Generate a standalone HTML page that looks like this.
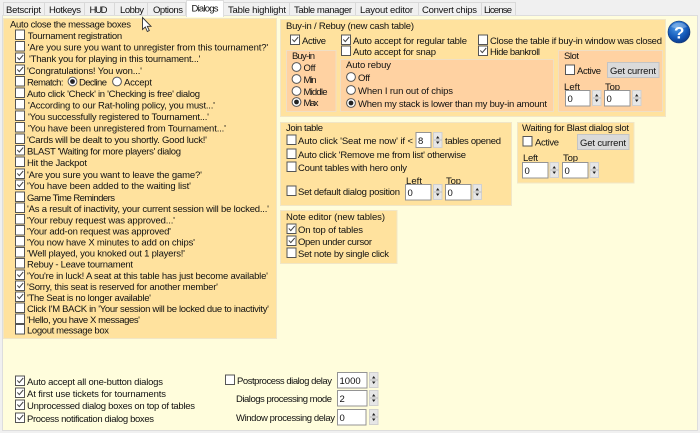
<!DOCTYPE html>
<html><head><meta charset="utf-8"><style>
html,body{margin:0;padding:0;width:700px;height:433px;overflow:hidden;background:#f0f0f0}
svg{display:block;filter:blur(.35px)}
text{font-family:"Liberation Sans",sans-serif;font-size:9.5px;fill:#111}
.b{fill:#FFE29E;stroke:#F1E6C6;stroke-width:1}
.s{fill:#FFD2A2;stroke:#F0DFC4;stroke-width:1}
.in{fill:#fff;stroke:#949494;stroke-width:1}
.bt{fill:#DADADA;stroke:#C4C4C4}
</style></head><body>
<svg width="700" height="433" viewBox="0 0 700 433" xmlns="http://www.w3.org/2000/svg">
<defs>
<g id="c"><rect x="-.5" y="-5" width="9" height="9.5" fill="#fff" stroke="#555"/></g>
<g id="k"><rect x="-.5" y="-5" width="9" height="9.5" fill="#fff" stroke="#555"/><path d="M1.3 -.6L3.3 1.6L7.2 -3" fill="none" stroke="#444" stroke-width="1"/></g>
<g id="r"><circle cx="4.5" cy="0" r="4.4" fill="#fff" stroke="#555"/></g>
<g id="q"><circle cx="4.5" cy="0" r="4.4" fill="#fff" stroke="#555"/><circle cx="4.5" cy="0" r="2.4" fill="#222"/></g>
<g id="p"><rect x=".5" y=".5" width="8.5" height="15" fill="#E6E6E6" stroke="#D0D0D0"/><path d="M4.7 4L3 6.5H6.5ZM4.7 12L3 9.5H6.5Z" fill="#222"/><path d="M1 8H9" stroke="#bbb"/></g>
<radialGradient id="h" cx=".4" cy=".3" r=".8"><stop offset="0" stop-color="#4d9be8"/><stop offset=".6" stop-color="#1258b8"/><stop offset="1" stop-color="#0a2f78"/></radialGradient>
</defs>

<!-- tabs -->
<g fill="#F0F0F0" stroke="#D9D9D9">
<rect x="3.5" y="2.5" width="41" height="14"/><rect x="44.5" y="2.5" width="40" height="14"/><rect x="84.5" y="2.5" width="30" height="14"/><rect x="114.5" y="2.5" width="33" height="14"/><rect x="147.5" y="2.5" width="38" height="14"/><rect x="223.5" y="2.5" width="66" height="14"/><rect x="289.5" y="2.5" width="66" height="14"/><rect x="355.5" y="2.5" width="63" height="14"/><rect x="418.5" y="2.5" width="63" height="14"/><rect x="481.5" y="2.5" width="34" height="14"/>
</g>
<rect x="2.5" y="15.5" width="695" height="415" fill="#FFFDDC" stroke="#DDD"/>
<rect x="186.5" y=".5" width="37" height="16" fill="#FFFFFF" stroke="#DDD"/>
<rect x="187" y="14" width="36" height="3" fill="#FFFFFF"/>
<text x="6" y="13" textLength="35">Betscript</text>
<text x="49" y="13" textLength="32">Hotkeys</text>
<text x="89.5" y="13" textLength="18">HUD</text>
<text x="120" y="13" textLength="24">Lobby</text>
<text x="153" y="13" textLength="30">Options</text>
<text x="191.5" y="11.5" textLength="27">Dialogs</text>
<text x="228" y="13" textLength="58">Table highlight</text>
<text x="294" y="13" textLength="58">Table manager</text>
<text x="360" y="13" textLength="53">Layout editor</text>
<text x="422" y="13" textLength="55">Convert chips</text>
<text x="484" y="13" textLength="28">License</text>

<!-- left box -->
<rect class="b" x="3.5" y="18.5" width="273" height="320"/>
<text x="10" y="27.5" textLength="121">Auto close the message boxes</text>
<use href="#c" x="16" y="35"/><text x="27.7" y="39" textLength="94.5">Tournament registration</text>
<use href="#c" x="16" y="46.5"/><text x="27.7" y="50.5" textLength="240.5">'Are you sure you want to unregister from this tournament?'</text>
<use href="#k" x="16" y="58"/><text x="29" y="62" textLength="171.5">'Thank you for playing in this tournament...'</text>
<use href="#k" x="16" y="70"/><text x="27" y="74" textLength="115">'Congratulations! You won...'</text>
<use href="#c" x="16" y="81.5"/><text x="27" y="85.5" textLength="36.5">Rematch:</text>
<use href="#q" x="68" y="81.5"/><text x="79" y="85.5" textLength="28">Decline</text>
<use href="#r" x="112.5" y="81.5"/><text x="124" y="85.5" textLength="28">Accept</text>
<use href="#c" x="16" y="93"/><text x="27" y="97" textLength="173">Auto click 'Check' in 'Checking is free' dialog</text>
<use href="#c" x="16" y="104.5"/><text x="28" y="108.5" textLength="187">'According to our Rat-holing policy, you must...'</text>
<use href="#c" x="16" y="116"/><text x="28" y="120" textLength="181">'You successfully registered to Tournament...'</text>
<use href="#c" x="16" y="127.5"/><text x="28" y="131.5" textLength="198">'You have been unregistered from Tournament...'</text>
<use href="#c" x="16" y="139"/><text x="27" y="143" textLength="180">'Cards will be dealt to you shortly. Good luck!'</text>
<use href="#k" x="16" y="150.5"/><text x="27" y="154.5" textLength="154">BLAST 'Waiting for more players' dialog</text>
<use href="#c" x="16" y="162"/><text x="27" y="166" textLength="60">Hit the Jackpot</text>
<use href="#k" x="16" y="174"/><text x="27" y="178" textLength="175">'Are you sure you want to leave the game?'</text>
<use href="#k" x="16" y="185"/><text x="27" y="189" textLength="164">'You have been added to the waiting list'</text>
<use href="#c" x="16" y="197"/><text x="27" y="201" textLength="88">Game Time Reminders</text>
<use href="#c" x="16" y="208"/><text x="27" y="212" textLength="242">'As a result of inactivity, your current session will be locked...'</text>
<use href="#c" x="16" y="219.5"/><text x="27" y="223.5" textLength="148">'Your rebuy request was approved...'</text>
<use href="#c" x="16" y="230.5"/><text x="27" y="234.5" textLength="144">'Your add-on request was approved'</text>
<use href="#c" x="16" y="241.5"/><text x="27" y="245.5" textLength="168">'You now have X minutes to add on chips'</text>
<use href="#c" x="16" y="252.5"/><text x="27" y="256.5" textLength="158">'Well played, you knoked out 1 players!'</text>
<use href="#c" x="16" y="263.5"/><text x="27" y="267.5" textLength="106">Rebuy - Leave tournament</text>
<use href="#k" x="16" y="275"/><text x="27" y="279" textLength="241">'You're in luck! A seat at this table has just become available'</text>
<use href="#k" x="16" y="286"/><text x="27" y="290" textLength="191">'Sorry, this seat is reserved for another member'</text>
<use href="#k" x="16" y="297"/><text x="27" y="301" textLength="124">'The Seat is no longer available'</text>
<use href="#c" x="16" y="308"/><text x="27" y="312" textLength="242">Click I'M BACK in 'Your session will be locked due to inactivity'</text>
<use href="#c" x="16" y="319"/><text x="27" y="323" textLength="113">'Hello, you have X messages'</text>
<use href="#c" x="16" y="329.5"/><text x="27" y="333.5" textLength="82">Logout message box</text>

<!-- buy-in -->
<rect class="b" x="280.5" y="19.5" width="385" height="97"/>
<text x="286" y="29" textLength="128">Buy-in / Rebuy (new cash table)</text>
<use href="#k" x="291" y="40"/><text x="302" y="44" textLength="24">Active</text>
<use href="#k" x="342" y="40"/><text x="353" y="44" textLength="114">Auto accept for regular table</text>
<use href="#c" x="342" y="51"/><text x="353" y="55" textLength="83">Auto accept for snap</text>
<use href="#c" x="479" y="40"/><text x="490" y="44" textLength="172">Close the table if buy-in window was closed</text>
<use href="#k" x="479" y="51"/><text x="490" y="55" textLength="50">Hide bankroll</text>

<rect class="s" x="286.5" y="50.5" width="49.5" height="61"/>
<text x="292" y="59" textLength="23">Buy-in</text>
<use href="#r" x="292" y="67"/><text x="303.5" y="71" textLength="12">Off</text>
<use href="#r" x="292" y="79"/><text x="303.5" y="83" textLength="13">Min</text>
<use href="#r" x="292" y="91"/><text x="303.5" y="95" textLength="24">Middle</text>
<use href="#q" x="292" y="102"/><text x="303.5" y="106" textLength="15">Max</text>

<rect class="s" x="340.5" y="59.5" width="213" height="52"/>
<text x="346" y="68" textLength="45">Auto rebuy</text>
<use href="#r" x="346.5" y="77"/><text x="358" y="81" textLength="12">Off</text>
<use href="#r" x="346.5" y="90"/><text x="358" y="94" textLength="95">When I run out of chips</text>
<use href="#q" x="346.5" y="103"/><text x="358" y="107" textLength="189">When my stack is lower than my buy-in amount</text>

<rect class="s" x="558.5" y="50.5" width="104" height="61"/>
<text x="564" y="59" textLength="15">Slot</text>
<use href="#c" x="566" y="70"/><text x="577" y="74" textLength="24">Active</text>
<rect class="bt" x="607.5" y="62.5" width="51.5" height="15"/><text x="610" y="74" textLength="46">Get current</text>
<text x="564" y="90" textLength="16">Left</text><text x="605" y="90" textLength="15">Top</text>
<rect class="in" x="565.5" y="90.5" width="24.5" height="15.5"/><text x="567.5" y="102">0</text><use href="#p" x="592" y="90"/>
<rect class="in" x="604.5" y="90.5" width="25.5" height="15.5"/><text x="606.5" y="102">0</text><use href="#p" x="632" y="90"/>

<!-- help -->
<circle cx="679" cy="32" r="11" fill="url(#h)" stroke="#0b2f70" stroke-width=".6"/>
<path d="M671 27a9 8 0 0 1 16 0a12 5 0 0 1 -16 0" fill="#fff" opacity=".28"/>
<text x="674" y="38.5" style="font-size:17px;font-weight:bold;fill:#fff">?</text>

<!-- join -->
<rect class="b" x="280.5" y="122.5" width="231" height="83"/>
<text x="286" y="131" textLength="37">Join table</text>
<use href="#c" x="287.5" y="140"/><text x="298" y="144" textLength="115">Auto click 'Seat me now' if &lt;</text>
<rect class="in" x="416" y="132.5" width="15" height="15"/><text x="418" y="144">8</text><use href="#p" x="433" y="132"/>
<text x="445" y="144" textLength="56">tables opened</text>
<use href="#c" x="287.5" y="154"/><text x="298" y="158" textLength="168">Auto click 'Remove me from list' otherwise</text>
<use href="#c" x="287.5" y="167"/><text x="298" y="171" textLength="109">Count tables with hero only</text>
<use href="#c" x="287.5" y="191"/><text x="298" y="195" textLength="102">Set default dialog position</text>
<text x="406" y="184" textLength="16">Left</text><text x="446" y="184" textLength="15">Top</text>
<rect class="in" x="405.5" y="184.5" width="25.5" height="15.5"/><text x="407.5" y="196">0</text><use href="#p" x="433" y="184"/>
<rect class="in" x="445.5" y="184.5" width="25.5" height="15.5"/><text x="447.5" y="196">0</text><use href="#p" x="472.5" y="184"/>

<!-- note -->
<rect class="b" x="280.5" y="210.5" width="116.5" height="53"/>
<text x="286" y="220" textLength="99">Note editor (new tables)</text>
<use href="#k" x="287.5" y="229"/><text x="298" y="233" textLength="65">On top of tables</text>
<use href="#k" x="287.5" y="241"/><text x="298" y="245" textLength="74">Open under cursor</text>
<use href="#c" x="287.5" y="253"/><text x="298" y="257" textLength="91">Set note by single click</text>

<!-- waiting -->
<rect class="b" x="517.5" y="122.5" width="116.5" height="60.5"/>
<text x="522" y="131" textLength="107">Waiting for Blast dialog slot</text>
<use href="#c" x="523.5" y="141.5"/><text x="535" y="145.5" textLength="24">Active</text>
<rect class="bt" x="577.5" y="134.5" width="51.5" height="15"/><text x="580" y="146" textLength="46">Get current</text>
<text x="523" y="161" textLength="15">Left</text><text x="563" y="161" textLength="15">Top</text>
<rect class="in" x="522.5" y="162.5" width="25.5" height="15.5"/><text x="524.5" y="174">0</text><use href="#p" x="549.5" y="162"/>
<rect class="in" x="562.5" y="162.5" width="25.5" height="15.5"/><text x="564.5" y="174">0</text><use href="#p" x="589.5" y="162"/>

<!-- bottom -->
<use href="#k" x="16" y="381"/><text x="27" y="385" textLength="136">Auto accept all one-button dialogs</text>
<use href="#k" x="16" y="393"/><text x="27" y="397" textLength="139">At first use tickets for tournaments</text>
<use href="#k" x="16" y="405"/><text x="27" y="409" textLength="168">Unprocessed dialog boxes on top of tables</text>
<use href="#k" x="16" y="418"/><text x="27" y="422" textLength="127">Process notification dialog boxes</text>
<use href="#c" x="226" y="380"/><text x="237" y="384" textLength="95">Postprocess dialog delay</text>
<rect class="in" x="337.5" y="372.5" width="29.5" height="15.5"/><text x="339.5" y="384">1000</text><use href="#p" x="369" y="372"/>
<text x="236" y="402" textLength="96">Dialogs processing mode</text>
<rect class="in" x="337.5" y="390.5" width="29.5" height="15.5"/><text x="339.5" y="402">2</text><use href="#p" x="369" y="390"/>
<text x="236" y="421" textLength="99">Window processing delay</text>
<rect class="in" x="337.5" y="409.5" width="28.5" height="15.5"/><text x="339.5" y="421">0</text><use href="#p" x="369" y="409"/>

<!-- cursor -->
<path d="M142.5 17.5V29.5L145.3 27L147.3 31.5L149.3 30.5L147.3 26.3H151Z" fill="#fff" stroke="#333" stroke-width=".9"/>
</svg>
</body></html>
